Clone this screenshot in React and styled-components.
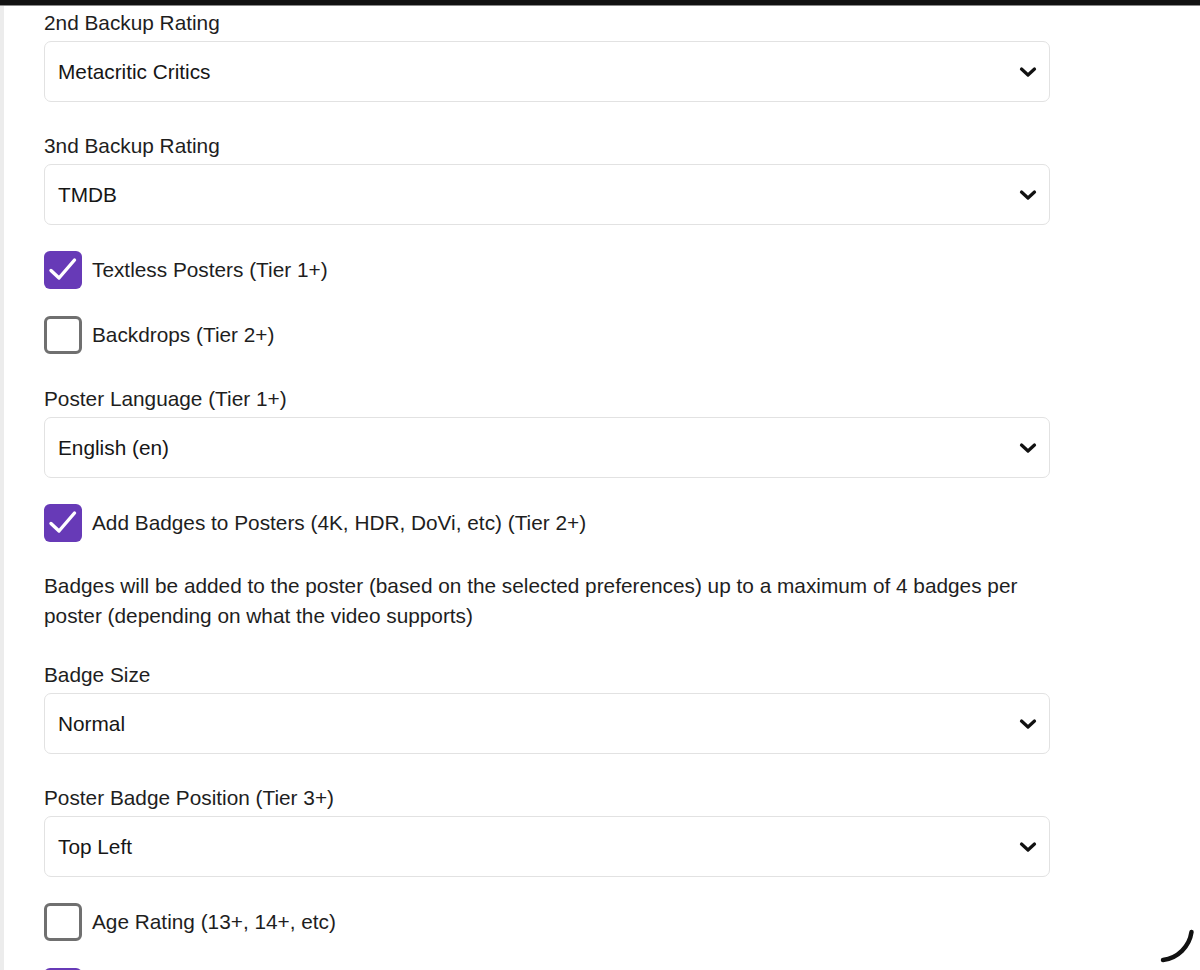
import React from 'react';
import styled, { createGlobalStyle } from 'styled-components';

const GlobalStyle = createGlobalStyle`
  html, body {
    margin: 0;
    padding: 0;
    background: #ffffff;
  }

  body {
    font-family: 'Liberation Sans', Arial, sans-serif;
    color: #1c1c1c;
    overflow: hidden;
  }
`;

const TopBar = styled.div`
  position: fixed;
  top: 0;
  left: 0;
  right: 0;
  height: 6px;
  background: #121212;
  border-bottom: 1px solid #8a8a8a;
  box-sizing: border-box;
  z-index: 10;
`;

const StyledPage = styled.div`
  display: flex;
  min-height: 970px;
  border-left: 4px solid #ececec;
`;

const StyledForm = styled.form`
  display: flex;
  flex-direction: column;
  gap: 24px;
  width: 1006px;
  padding: 3px 0 0 40px;
`;

const Field = styled.div`
  display: flex;
  flex-direction: column;
`;

const Label = styled.label`
  padding-top: 8px;
  margin-bottom: 6px;
  font-size: 20.8px;
  line-height: 24px;
  color: #1e1e1e;
`;

const SelectBox = styled.div`
  display: flex;
  align-items: center;
  justify-content: space-between;
  height: 61px;
  box-sizing: border-box;
  padding: 0 12px 0 13px;
  border: 1px solid #e2e2e2;
  border-radius: 7px;
  background: #ffffff;
  font-size: 20.8px;
  color: #161616;
`;

const CheckRow = styled.label`
  display: flex;
  align-items: center;
  gap: 10px;
  min-height: 41px;
  font-size: 20.8px;
  color: #1e1e1e;
`;

const Box = styled.span`
  display: flex;
  align-items: center;
  justify-content: center;
  flex-shrink: 0;
  width: 38px;
  height: 38px;
  box-sizing: border-box;
  border-radius: 6px;
  border: ${({ $checked }) => ($checked ? 'none' : '3px solid #707070')};
  background: ${({ $checked }) => ($checked ? '#673ab7' : '#ffffff')};
`;

const Note = styled.p`
  margin: 0;
  padding-top: 4px;
  font-size: 20.8px;
  line-height: 30px;
  color: #1e1e1e;
`;

const Spinner = styled.svg`
  position: fixed;
  left: 1150px;
  top: 920px;
  width: 50px;
  height: 50px;
`;

const Chevron = () => (
  <svg width="18" height="12" viewBox="0 0 18 12">
    <path d="M2.5 3 L9 9 L15.5 3" fill="none" stroke="#111" strokeWidth="3.2" strokeLinecap="round" strokeLinejoin="round" />
  </svg>
);

const Select = ({ label, value }) => (
  <Field>
    <Label>{label}</Label>
    <SelectBox>
      <span>{value}</span>
      <Chevron />
    </SelectBox>
  </Field>
);

const Checkbox = ({ checked, children }) => (
  <CheckRow>
    <Box $checked={checked}>
      {checked && (
        <svg width="38" height="38" viewBox="0 0 38 38">
          <path d="M7 19.5 L15 27 L30.5 9" fill="none" stroke="#fff" strokeWidth="3.4" strokeLinecap="round" strokeLinejoin="round" />
        </svg>
      )}
    </Box>
    {children}
  </CheckRow>
);

const App = () => (
  <>
    <GlobalStyle />
    <TopBar />
    <StyledPage>
      <StyledForm>
        <Select label="2nd Backup Rating" value="Metacritic Critics" />
        <Select label="3nd Backup Rating" value="TMDB" />
        <Checkbox checked>Textless Posters (Tier 1+)</Checkbox>
        <Checkbox>Backdrops (Tier 2+)</Checkbox>
        <Select label="Poster Language (Tier 1+)" value="English (en)" />
        <Checkbox checked>Add Badges to Posters (4K, HDR, DoVi, etc) (Tier 2+)</Checkbox>
        <Note>
          Badges will be added to the poster (based on the selected preferences) up to a maximum of 4 badges per
          poster (depending on what the video supports)
        </Note>
        <Select label="Badge Size" value="Normal" />
        <Select label="Poster Badge Position (Tier 3+)" value="Top Left" />
        <Checkbox>Age Rating (13+, 14+, etc)</Checkbox>
        <Checkbox checked />
      </StyledForm>
    </StyledPage>
    <Spinner viewBox="0 0 50 50">
      <path d="M41.5 12 A33 33 0 0 1 13 40" fill="none" stroke="#111" strokeWidth="4.5" strokeLinecap="round" />
    </Spinner>
  </>
);

export default App;
